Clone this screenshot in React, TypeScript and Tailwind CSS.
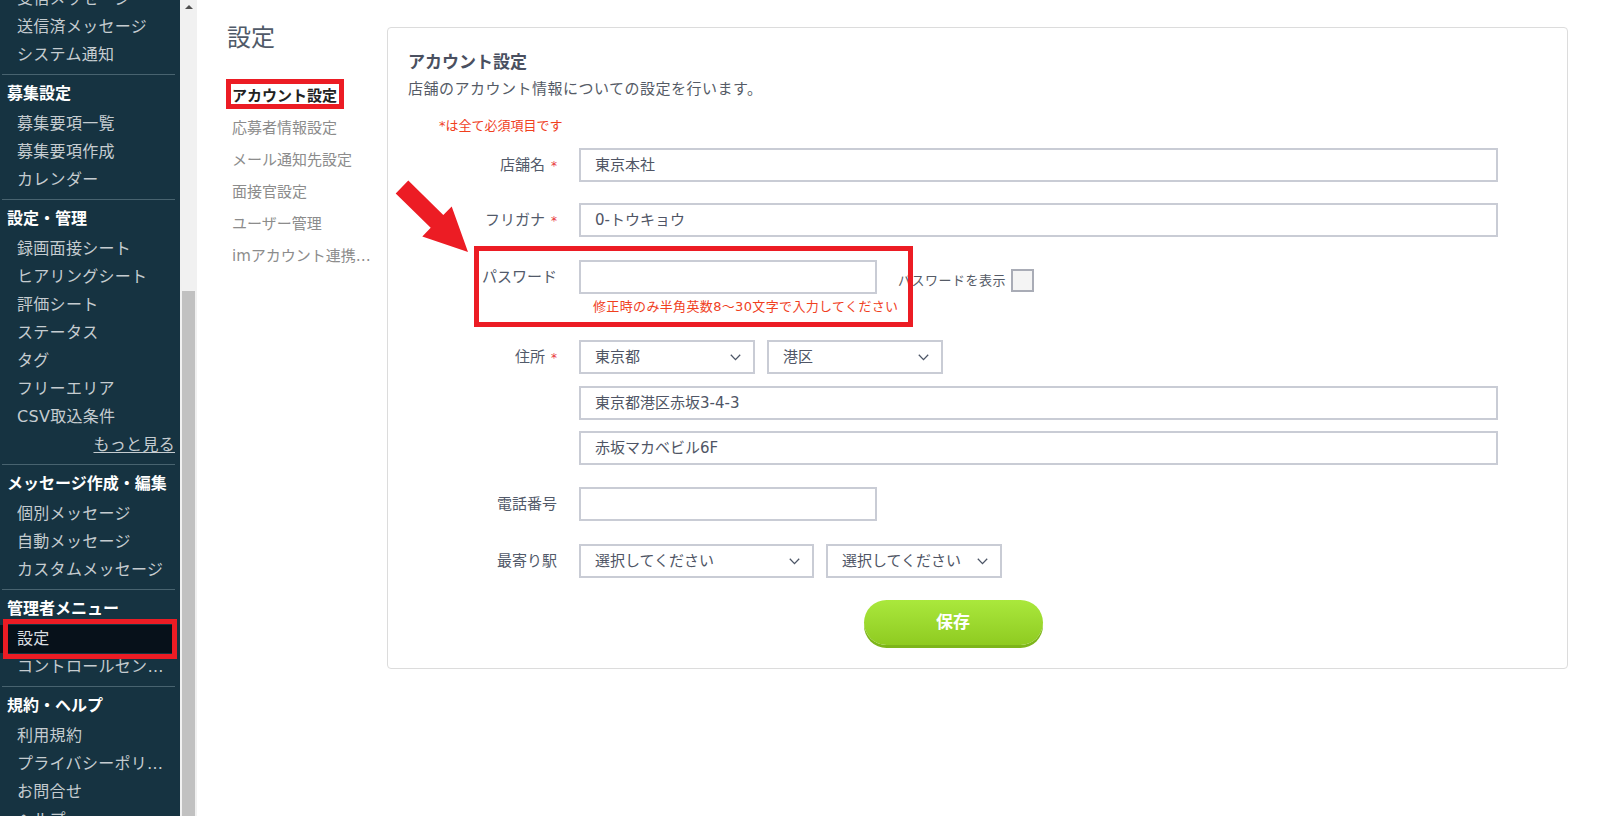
import React from "react";

type SideSection = {
  title?: string;
  items: { label: string; active?: boolean; more?: boolean }[];
};

const sections: SideSection[] = [
  {
    items: [
      { label: "受信メッセージ" },
      { label: "送信済メッセージ" },
      { label: "システム通知" },
    ],
  },
  {
    title: "募集設定",
    items: [
      { label: "募集要項一覧" },
      { label: "募集要項作成" },
      { label: "カレンダー" },
    ],
  },
  {
    title: "設定・管理",
    items: [
      { label: "録画面接シート" },
      { label: "ヒアリングシート" },
      { label: "評価シート" },
      { label: "ステータス" },
      { label: "タグ" },
      { label: "フリーエリア" },
      { label: "CSV取込条件" },
      { label: "もっと見る", more: true },
    ],
  },
  {
    title: "メッセージ作成・編集",
    items: [
      { label: "個別メッセージ" },
      { label: "自動メッセージ" },
      { label: "カスタムメッセージ" },
    ],
  },
  {
    title: "管理者メニュー",
    items: [
      { label: "設定", active: true },
      { label: "コントロールセンター" },
    ],
  },
  {
    title: "規約・ヘルプ",
    items: [
      { label: "利用規約" },
      { label: "プライバシーポリシー" },
      { label: "お問合せ" },
      { label: "ヘルプ" },
    ],
  },
];

const navItems = [
  "アカウント設定",
  "応募者情報設定",
  "メール通知先設定",
  "面接官設定",
  "ユーザー管理",
  "imアカウント連携設定",
];

function Chevron() {
  return (
    <svg width="11" height="7" viewBox="0 0 11 7" className="shrink-0">
      <polyline
        points="0.8,0.8 5.5,5.6 10.2,0.8"
        fill="none"
        stroke="#4c5566"
        strokeWidth="1.3"
      />
    </svg>
  );
}

function SelectBox({ value, width }: { value: string; width: string }) {
  return (
    <div
      className={`flex h-[34px] items-center justify-between border-2 border-[#c9ccd5] bg-white pl-[14px] pr-[12px] pt-[1px] text-[15px] text-[#4f5565] ${width}`}
    >
      <span>{value}</span>
      <Chevron />
    </div>
  );
}

function TextBox({ value, width }: { value?: string; width: string }) {
  return (
    <div
      className={`flex h-[34px] items-center border-2 border-[#c9ccd5] bg-white pl-[14px] pt-[1px] text-[15px] text-[#4f5565] ${width}`}
    >
      {value}
    </div>
  );
}

function Label({ text, required }: { text: string; required?: boolean }) {
  return (
    <div className="flex h-[34px] w-[149px] shrink-0 items-center justify-end pt-[1px] text-[15px] text-[#525a6a]">
      <span>{text}</span>
      {required && (
        <span className="ml-[6px] text-[12px] leading-none text-[#e8383d]">*</span>
      )}
    </div>
  );
}

function Sidebar() {
  return (
    <aside className="w-[180px] shrink-0 overflow-hidden bg-[#163341]">
      <div className="-mt-[15px]">
        {sections.map((s, i) => (
          <div key={i}>
            {i > 0 && <div className="-mt-px ml-[2px] h-px w-[173px] bg-[#48636f]" />}
            {s.title && (
              <div className="h-[35px] pl-[7px] pt-[7px] text-[16px] font-bold leading-[24px] text-white">
                {s.title}
              </div>
            )}
            <div className="pb-[6px]">
              {s.items.map((it) =>
                it.more ? (
                  <div
                    key={it.label}
                    className="flex h-[28px] items-center justify-end pr-[5px] text-[16px] tracking-[0.3px] text-[#c5ccd0] underline underline-offset-2"
                  >
                    {it.label}
                  </div>
                ) : (
                  <div
                    key={it.label}
                    className={`flex h-[28px] w-[175px] items-center pl-[17px] pr-[4px] text-[16px] tracking-[0.3px] ${
                      it.active ? "bg-[#07111a] text-[#d8dde0]" : "text-[#c5ccd0]"
                    }`}
                  >
                    <span className="truncate">{it.label}</span>
                  </div>
                )
              )}
            </div>
          </div>
        ))}
      </div>
    </aside>
  );
}

function Scrollbar() {
  return (
    <div className="flex w-[17px] shrink-0 flex-col bg-[#f1f1f1]">
      <div className="flex h-[12px] items-center justify-center pt-[2px]">
        <div className="h-0 w-0 border-x-[4px] border-b-[4px] border-x-transparent border-b-[#505050]" />
      </div>
      <div className="h-[279px]" />
      <div className="mx-[2px] flex-1 bg-[#c1c1c1]" />
    </div>
  );
}

export default function App() {
  return (
    <div className="relative flex h-[816px] w-[1617px] overflow-hidden bg-white font-['DejaVu_Sans','Noto_Sans_CJK_JP',sans-serif]">
      <Sidebar />
      <Scrollbar />

      <main className="flex flex-1 pl-[30px] pt-[22px]">
        {/* settings sub nav */}
        <div className="w-[160px] shrink-0">
          <div className="h-[32px] text-[24px] leading-[32px] text-[#505a68]">設定</div>
          <div className="mt-[26px]">
            {navItems.map((n, i) => (
              <div
                key={n}
                className={`flex h-[32px] items-center pl-[5px] pr-[8px] text-[15px] ${
                  i === 0 ? "font-bold text-[#222222]" : "text-[#8c8c8c]"
                }`}
              >
                <span className="truncate">{n}</span>
              </div>
            ))}
          </div>
        </div>

        {/* account card */}
        <section className="mt-[5px] h-[642px] w-[1181px] shrink-0 rounded-[4px] border border-[#dcdcdc] pl-[20px] pt-[22px]">
          <h2 className="text-[17px] font-bold leading-[24px] text-[#4a5060]">アカウント設定</h2>
          <p className="mt-[3px] text-[15px] leading-[24px] tracking-[0.5px] text-[#555b66]">
            店舗のアカウント情報についての設定を行います。
          </p>
          <p className="ml-[31px] mt-[15px] text-[13px] leading-[20px] text-[#f0401e]">
            *は全て必須項目です
          </p>

          <div className="w-[1090px]">
            <div className="mt-[12px] flex">
              <Label text="店舗名" required />
              <div className="ml-[22px]">
                <TextBox value="東京本社" width="w-[919px]" />
              </div>
            </div>

            <div className="mt-[21px] flex">
              <Label text="フリガナ" required />
              <div className="ml-[22px]">
                <TextBox value="0-トウキョウ" width="w-[919px]" />
              </div>
            </div>

            <div className="mt-[23px] flex">
              <Label text="パスワード" />
              <div className="ml-[22px]">
                <div className="flex items-center">
                  <TextBox width="w-[298px]" />
                  <span className="ml-[21px] mt-[7px] text-[13px] tracking-[0.5px] text-[#555b66]">
                    パスワードを表示
                  </span>
                  <div className="ml-[5px] mt-[6px] h-[23px] w-[23px] border-2 border-[#a9acb6] bg-[#f4f4f4]" />
                </div>
                <p className="ml-[14px] mt-[5px] pt-[1px] text-[13px] leading-[14px] tracking-[0.35px] text-[#f0401e]">
                  修正時のみ半角英数8～30文字で入力してください
                </p>
              </div>
            </div>

            <div className="mt-[26px] flex">
              <Label text="住所" required />
              <div className="ml-[22px]">
                <div className="flex gap-[12px]">
                  <SelectBox value="東京都" width="w-[176px]" />
                  <SelectBox value="港区" width="w-[176px]" />
                </div>
                <div className="mt-[12px]">
                  <TextBox value="東京都港区赤坂3-4-3" width="w-[919px]" />
                </div>
                <div className="mt-[11px]">
                  <TextBox value="赤坂マカベビル6F" width="w-[919px]" />
                </div>
              </div>
            </div>

            <div className="mt-[22px] flex">
              <Label text="電話番号" />
              <div className="ml-[22px]">
                <TextBox width="w-[298px]" />
              </div>
            </div>

            <div className="mt-[23px] flex">
              <Label text="最寄り駅" />
              <div className="ml-[22px] flex gap-[12px]">
                <SelectBox value="選択してください" width="w-[235px]" />
                <SelectBox value="選択してください" width="w-[176px]" />
              </div>
            </div>

            <div className="mt-[22px] flex justify-center">
              <button className="h-[45px] w-[179px] rounded-full bg-gradient-to-b from-[#aae83c] to-[#8fcb20] pt-[1px] text-[17px] font-bold text-white shadow-[0_3px_0_#7db51a]">
                保存
              </button>
            </div>
          </div>
        </section>
      </main>

      {/* red annotation overlays */}
      <div className="pointer-events-none absolute left-[3px] top-[619px] h-[40px] w-[174px] border-[5px] border-[#ec1c24]" />
      <div className="pointer-events-none absolute left-[226px] top-[79px] h-[30px] w-[118px] border-[5px] border-[#ec1c24]" />
      <div className="pointer-events-none absolute left-[474px] top-[246px] h-[81px] w-[439px] border-[5px] border-[#ec1c24]" />
      <svg
        className="pointer-events-none absolute left-0 top-0"
        width="1617"
        height="816"
        viewBox="0 0 1617 816"
      >
        <polygon
          points="395.7,193.4 408.3,180.6 443.3,215 451.7,206.4 468,252 422.3,236.4 430.7,227.8"
          fill="#ec1c24"
        />
      </svg>
    </div>
  );
}
